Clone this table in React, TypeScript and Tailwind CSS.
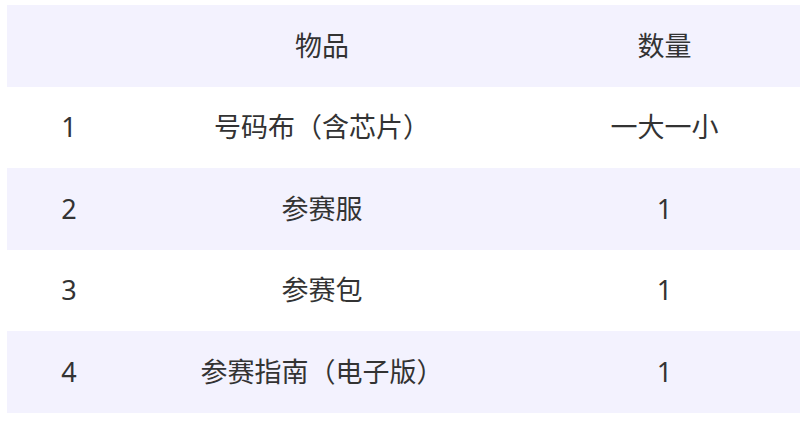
const rows = [
  { no: "1", item: "号码布（含芯片）", qty: "一大一小" },
  { no: "2", item: "参赛服", qty: "1" },
  { no: "3", item: "参赛包", qty: "1" },
  { no: "4", item: "参赛指南（电子版）", qty: "1" },
];

export default function App() {
  return (
    <div className="h-[422px] w-[800px] overflow-hidden bg-white pl-[7px] pt-[5px] font-['Noto_Sans','Noto_Sans_CJK_SC',sans-serif] text-[27px] text-[#333333]">
      <div className="grid h-[81.5px] grid-cols-[124px_382px_1fr] items-center bg-[#f3f2fe]">
        <div />
        <div className="text-center">物品</div>
        <div className="pl-4 text-center">数量</div>
      </div>
      {rows.map((r, i) => (
        <div
          key={r.no}
          className={`grid h-[81.5px] grid-cols-[124px_382px_1fr] items-center ${
            i % 2 === 1 ? "bg-[#f3f2fe]" : "bg-white"
          }`}
        >
          <div className="text-center">{r.no}</div>
          <div className="text-center">{r.item}</div>
          <div className="pl-4 text-center">{r.qty}</div>
        </div>
      ))}
    </div>
  );
}
